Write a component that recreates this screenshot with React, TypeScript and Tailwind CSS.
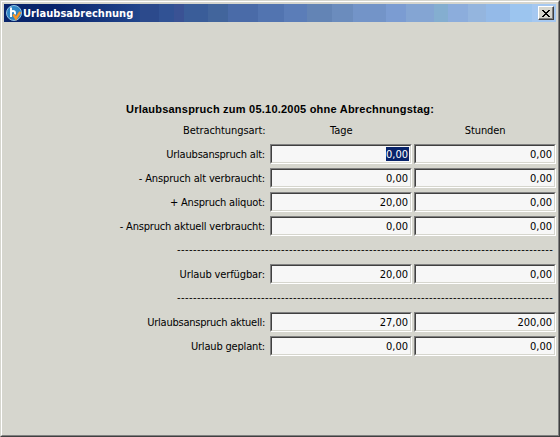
import React from 'react';

type Row = { label: string; tracking: string; days: string; hours: string; selected?: boolean };

const entitlement: Row[] = [
  { label: 'Urlaubsanspruch alt:', tracking: 'tracking-[-0.2px]', days: '0,00', hours: '0,00', selected: true },
  { label: '- Anspruch alt verbraucht:', tracking: 'tracking-[-0.14px]', days: '0,00', hours: '0,00' },
  { label: '+ Anspruch aliquot:', tracking: 'tracking-[-0.18px]', days: '20,00', hours: '0,00' },
  { label: '- Anspruch aktuell verbraucht:', tracking: 'tracking-[-0.18px]', days: '0,00', hours: '0,00' },
];
const available: Row[] = [
  { label: 'Urlaub verfügbar:', tracking: 'tracking-[-0.12px]', days: '20,00', hours: '0,00' },
];
const current: Row[] = [
  { label: 'Urlaubsanspruch aktuell:', tracking: 'tracking-[-0.25px]', days: '27,00', hours: '200,00' },
  { label: 'Urlaub geplant:', tracking: 'tracking-[-0.18px]', days: '0,00', hours: '0,00' },
];

const titleBands = [
  'w-[136px] bg-[linear-gradient(90deg,#08246b,#08246b_35%,#21458c)]',
  'w-[19px] bg-[#2c4a8c]',
  'w-[15px] bg-[#315294]',
  'w-[10px] bg-[#3a5294]',
  'w-[24px] bg-[#3a5d99]',
  'w-[20px] bg-[#42659c]',
  'w-[30px] bg-[#4a6ba8]',
  'w-[26px] bg-[#5274b0]',
  'w-[23px] bg-[#5b7db8]',
  'w-[25px] bg-[#6384b5]',
  'w-[21px] bg-[#6b8cbd]',
  'w-[33px] bg-[#7394c8]',
  'w-[20px] bg-[#7b9cd2]',
  'w-[28px] bg-[#84a5d3]',
  'w-[14px] bg-[#84aed0]',
  'w-[20px] bg-[#8caddc]',
  'w-[18px] bg-[#94b5de]',
  'w-[24px] bg-[#94bae8]',
  'w-[22px] bg-[#9cc5ef]',
  'flex-1 bg-[#a5c8f1]',
];

function Field({ value, selected }: { value: string; selected?: boolean }) {
  return (
    <div className="h-5 w-[142px] border border-t-[#808080] border-l-[#808080] border-r-white border-b-white">
      <div className="flex h-full items-center justify-end border border-t-[#404040] border-l-[#404040] border-r-[#d6d6ce] border-b-[#d6d6ce] bg-[#f7f7f7] pr-px">
        <span className={selected ? 'h-[14px] bg-[#08246b] pr-px leading-[15px] text-white' : 'h-[14px] pr-px leading-[15px]'}>{value}</span>
      </div>
    </div>
  );
}

function Rows({ rows }: { rows: Row[] }) {
  return (
    <>
      {rows.map((r) => (
        <div key={r.label} className="flex h-6 items-start">
          <div className={`w-[265px] pt-px pr-px text-right leading-5 ${r.tracking}`}>{r.label}</div>
          <div className="ml-1 flex gap-0.5">
            <Field value={r.days} selected={r.selected} />
            <Field value={r.hours} />
          </div>
        </div>
      ))}
    </>
  );
}

function Rule() {
  return (
    <div className="h-6 overflow-hidden pl-[175px] leading-5 tracking-[0.43px]">{'-'.repeat(94)}</div>
  );
}

function Logo() {
  return (
    <svg className="mt-px ml-0.5 h-4 w-4" viewBox="0 0 16 16">
      <circle cx="8" cy="8" r="7.5" fill="#2f84c4" stroke="#8fc3e4" strokeWidth="1" />
      <path d="M5 2.5v9.5M5 8q0-2 2-2t2 2v1.5" fill="none" stroke="#fff" strokeWidth="1.9" />
      <path d="M7.3 9.3l2.7 4.2 4.3-6.5" fill="none" stroke="#f79427" strokeWidth="2.4" />
    </svg>
  );
}

export default function App() {
  return (
    <div className="h-[437px] w-[560px] border border-t-[#d6d6ce] border-l-[#d6d6ce] border-r-[#404040] border-b-[#404040] bg-[#d6d6ce] font-['DejaVu_Sans_Condensed','DejaVu_Sans',sans-serif] text-[11px] whitespace-nowrap text-black [font-stretch:condensed]">
      <div className="h-full border border-t-white border-l-white border-r-[#808080] border-b-[#808080] p-0.5">
        <header className="grid h-[18px] grid-rows-[18px]">
          <div className="col-start-1 row-start-1 flex">
            {titleBands.map((band) => (
              <div key={band} className={band} />
            ))}
          </div>
          <div className="col-start-1 row-start-1 flex items-start">
            <Logo />
            <h1 className="ml-px text-[11px] leading-[19px] font-bold tracking-[0.05px] text-white">Urlaubsabrechnung</h1>
            <button className="mt-0.5 mr-0.5 ml-auto flex h-[14px] w-4 items-center justify-center border border-t-white border-l-white border-r-[#404040] border-b-[#404040] bg-[#d6d6ce] shadow-[inset_-1px_-1px_#808080]">
              <svg className="h-[7px] w-2" viewBox="0 0 8 7" shapeRendering="crispEdges">
                <path d="M0 0h2v1h1v1h2v-1h1v-1h2v1h-1v1h-1v1h-1v1h1v1h1v1h1v1h-2v-1h-1v-1h-2v1h-1v1h-2v-1h1v-1h1v-1h1v-1h-1v-1h-1v-1h-1z" />
              </svg>
            </button>
          </div>
        </header>
        <main className="-ml-0.5 pt-[79px]">
          <h2 className="ml-[124px] h-4 font-['Liberation_Sans',Arial,sans-serif] text-[11px] leading-4 font-bold tracking-[0.225px]">
            Urlaubsanspruch zum 05.10.2005 ohne Abrechnungstag:
          </h2>
          <div className="flex h-[27px] items-center pt-px">
            <div className="w-[265px] pr-px text-right tracking-[-0.08px]">Betrachtungsart:</div>
            <div className="ml-1 w-[142px] text-center">Tage</div>
            <div className="ml-0.5 w-[142px] text-center tracking-[-0.1px]">Stunden</div>
          </div>
          <Rows rows={entitlement} />
          <Rule />
          <Rows rows={available} />
          <Rule />
          <Rows rows={current} />
        </main>
      </div>
    </div>
  );
}
